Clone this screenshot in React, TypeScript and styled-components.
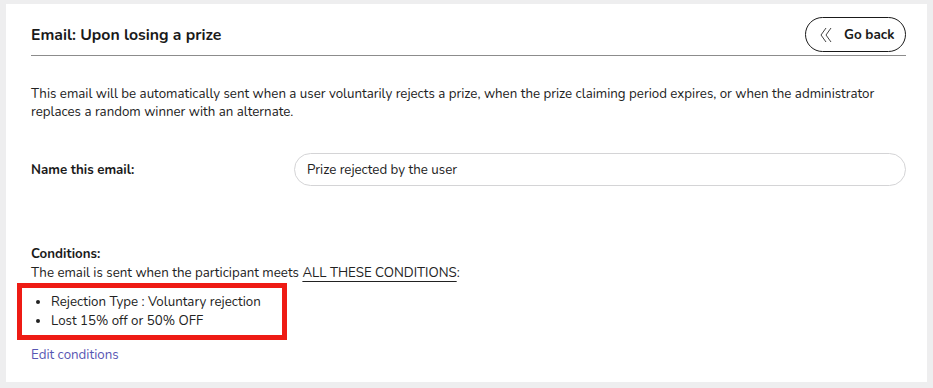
import React from "react";
import styled, { createGlobalStyle } from "styled-components";

const GlobalStyle = createGlobalStyle`
  html, body {
    margin: 0;
    padding: 0;
    background: #eeeeef;
  }
  body {
    font-family: "Nunito", Lato, "Open Sans", sans-serif;
    color: #1d1d1f;
  }
`;

const Page = styled.div`
  padding: 4px 6px 6px 6px;
`;

const Card = styled.div`
  background: #ffffff;
  height: 378px;
  box-sizing: border-box;
  padding: 13px 21px 0 25px;
  display: flex;
  flex-direction: column;
`;

const Header = styled.div`
  display: flex;
  align-items: center;
  justify-content: space-between;
  padding-bottom: 3px;
  border-bottom: 1px solid #8c8c8c;
`;

const Title = styled.h1`
  margin: 0;
  font-size: 15.8px;
  font-weight: 700;
  color: #1a1a1a;
`;

const BackButton = styled.button`
  display: flex;
  align-items: center;
  gap: 12px;
  height: 35px;
  width: 101px;
  padding: 0 0 0 14px;
  box-sizing: border-box;
  border: 1px solid #1a1a1a;
  border-radius: 18px;
  background: #fff;
  font-family: inherit;
  font-size: 13.5px;
  font-weight: 700;
  color: #1a1a1a;
  cursor: pointer;
`;

const Description = styled.p`
  margin: 29px 0 0 0;
  font-size: 13.3px;
  line-height: 18px;
  color: #222;
`;

const FieldRow = styled.div`
  display: grid;
  grid-template-columns: 263px 1fr;
  align-items: center;
  margin-top: 32px;
`;

const Label = styled.label`
  font-size: 13.3px;
  font-weight: 700;
  color: #1a1a1a;
`;

const TextInput = styled.input`
  height: 33px;
  box-sizing: border-box;
  border: 1px solid #d4d4d6;
  border-radius: 17px;
  padding: 0 12px;
  font-family: inherit;
  font-size: 13.3px;
  color: #222;
  outline: none;
`;

const Conditions = styled.section`
  margin-top: 59px;
  font-size: 13.3px;
  line-height: 19px;
  color: #222;
`;

const ConditionsTitle = styled.div`
  font-weight: 700;
  color: #1a1a1a;
`;

const Emphasis = styled.span`
  text-decoration: underline;
  text-underline-offset: 4px;
`;

const Highlight = styled.div`
  margin: 0 0 0 -14px;
  width: 270px;
  height: 57px;
  box-sizing: border-box;
  border: 5px solid #ee1b14;
  display: flex;
  align-items: center;
`;

const BulletList = styled.ul`
  margin: 0;
  padding-left: 29px;
  list-style: disc;
`;

const EditLink = styled.a`
  display: inline-block;
  margin-top: 6px;
  color: #5856b3;
  text-decoration: none;
  cursor: pointer;
`;

function DoubleChevron() {
  return (
    <svg width="12" height="16" viewBox="0 0 12 16" fill="none">
      <path d="M6 1 L1 8 L6 15" stroke="#444" strokeWidth="1" />
      <path d="M11 1 L6 8 L11 15" stroke="#444" strokeWidth="1" />
    </svg>
  );
}

export default function App() {
  return (
    <>
      <GlobalStyle />
      <Page>
        <Card>
          <Header>
            <Title>Email: Upon losing a prize</Title>
            <BackButton>
              <DoubleChevron />
              Go back
            </BackButton>
          </Header>
          <Description>
            This email will be automatically sent when a user voluntarily rejects a prize, when
            the prize claiming period expires, or when the administrator replaces a random winner
            with an alternate.
          </Description>
          <FieldRow>
            <Label>Name this email:</Label>
            <TextInput defaultValue="Prize rejected by the user" />
          </FieldRow>
          <Conditions>
            <ConditionsTitle>Conditions:</ConditionsTitle>
            <div>
              The email is sent when the participant meets <Emphasis>ALL THESE CONDITIONS</Emphasis>:
            </div>
            <Highlight>
              <BulletList>
                <li>Rejection Type : Voluntary rejection</li>
                <li>Lost 15% off or 50% OFF</li>
              </BulletList>
            </Highlight>
            <EditLink>Edit conditions</EditLink>
          </Conditions>
        </Card>
      </Page>
    </>
  );
}
